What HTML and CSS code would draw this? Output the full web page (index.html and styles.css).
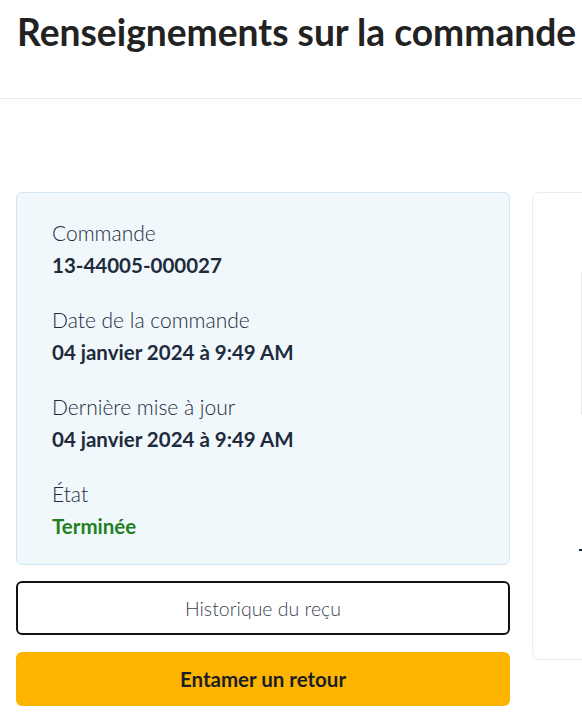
FILE: index.html
```html
<!DOCTYPE html>
<html lang="fr">
<head>
  <meta charset="UTF-8" />
  <meta name="viewport" content="width=device-width, initial-scale=1" />
  <title>Renseignements sur la commande</title>
  <link rel="stylesheet" href="styles.css">
</head>
<body>
  <header class="page-header">
    <h1>Renseignements sur la commande</h1>
  </header>

  <main class="order-layout">
    <div class="order-side">
      <dl class="order-info">
        <div class="info-row">
          <dt>Commande</dt>
          <dd>13-44005-000027</dd>
        </div>
        <div class="info-row">
          <dt>Date de la commande</dt>
          <dd>04 janvier 2024 à 9:49 AM</dd>
        </div>
        <div class="info-row">
          <dt>Dernière mise à jour</dt>
          <dd>04 janvier 2024 à 9:49 AM</dd>
        </div>
        <div class="info-row">
          <dt>État</dt>
          <dd class="status-done">Terminée</dd>
        </div>
      </dl>

      <button class="btn btn-outline">Historique du reçu</button>
      <button class="btn btn-primary">Entamer un retour</button>
    </div>

    <section class="order-items">
      <div class="item-thumb"></div>
      <div class="item-qty" aria-hidden="true"></div>
    </section>
  </main>
</body>
</html>
```

FILE: styles.css
```css
* {
  box-sizing: border-box;
}
html, body {
  overflow: hidden;
}
body {
  margin: 0;
  font-family: Lato, "Noto Sans", sans-serif;
  color: #1d2b3c;
  background: #fff;
}

/* En-tête */
.page-header {
  padding: 10px 17px 44px;
  border-bottom: 1px solid #e9eaeb;
}
.page-header h1 {
  margin: 0;
  font-size: 37.2px;
  line-height: 44px;
  font-weight: 700;
  color: #222;
  white-space: nowrap;
}

/* Colonnes */
.order-layout {
  display: grid;
  grid-template-columns: 494px 494px;
  gap: 22px;
  padding: 93px 16px 0;
  width: 1100px;
}
.order-side {
  display: flex;
  flex-direction: column;
  gap: 16px;
}

/* Carte infos */
.order-info {
  margin: 0;
  padding: 24px 35px 22px;
  background: #f1f8fc;
  border: 1px solid #cfe6f3;
  border-radius: 6px;
  display: flex;
  flex-direction: column;
  gap: 23px;
}
.order-info dt {
  font-size: 21px;
  line-height: 32px;
  font-weight: 300;
}
.order-info dd {
  margin: 0;
  font-size: 20.5px;
  line-height: 32px;
  font-weight: 700;
}
.status-done {
  color: #24801f;
}

/* Boutons */
.btn {
  display: block;
  width: 100%;
  height: 54px;
  border-radius: 6px;
  font-family: inherit;
  cursor: pointer;
}
.btn-outline {
  background: #fff;
  border: 2px solid #111;
  color: #3b4652;
  font-size: 19.5px;
  font-weight: 300;
}
.btn-primary {
  margin-top: 1px;
  background: #ffb400;
  border: none;
  color: #1a1f26;
  font-size: 20.5px;
  font-weight: 700;
}

/* Carte articles (coupée à droite) */
.order-items {
  height: 468px;
  border: 1px solid #ececec;
  border-radius: 8px;
  padding: 79px 0 0 48px;
}
.item-thumb {
  height: 143px;
  border-left: 1px solid #ebebeb;
}
.item-qty {
  margin: 134px 0 0 -2px;
  width: 4px;
  height: 2px;
  background: #1d2b3c;
}
```
